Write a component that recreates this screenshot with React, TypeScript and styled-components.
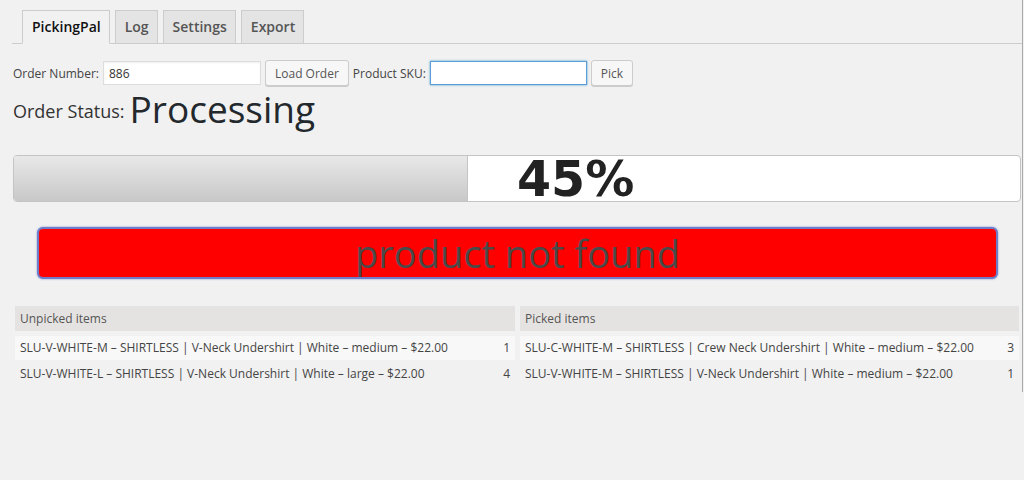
import React from "react";
import styled, { createGlobalStyle } from "styled-components";

const GlobalStyle = createGlobalStyle`
  html, body {
    margin: 0;
    padding: 0;
    background: #f1f1f1;
  }
  body {
    font-family: "Open Sans", "Liberation Sans", sans-serif;
    color: #444;
  }
`;

type Item = { sku: string; qty: number };

const unpicked: Item[] = [
  { sku: "SLU-V-WHITE-M – SHIRTLESS | V-Neck Undershirt | White – medium – $22.00", qty: 1 },
  { sku: "SLU-V-WHITE-L – SHIRTLESS | V-Neck Undershirt | White – large – $22.00", qty: 4 },
];

const picked: Item[] = [
  { sku: "SLU-C-WHITE-M – SHIRTLESS | Crew Neck Undershirt | White – medium – $22.00", qty: 3 },
  { sku: "SLU-V-WHITE-M – SHIRTLESS | V-Neck Undershirt | White – medium – $22.00", qty: 1 },
];

const tabs = ["PickingPal", "Log", "Settings", "Export"];

function ItemTable({ title, items }: { title: string; items: Item[] }) {
  return (
    <Table>
      <TableHead>{title}</TableHead>
      {items.map((item, i) => (
        <TableRow key={item.sku} $striped={i % 2 === 0}>
          <span>{item.sku}</span>
          <span>{item.qty}</span>
        </TableRow>
      ))}
    </Table>
  );
}

export default function App() {
  const progress = 45;
  return (
    <Page>
      <GlobalStyle />
      <TabBar>
        {tabs.map((t, i) => (
          <Tab key={t} $active={i === 0}>
            {t}
          </Tab>
        ))}
      </TabBar>

      <FormRow>
        <Label>Order Number:</Label>
        <TextInput defaultValue="886" $width={158} />
        <Button>Load Order</Button>
        <Label>Product SKU:</Label>
        <TextInput $width={157} $focused />
        <Button>Pick</Button>
      </FormRow>

      <StatusLine>
        <StatusLabel>Order Status:</StatusLabel>
        <StatusValue>Processing</StatusValue>
      </StatusLine>

      <Progress>
        <ProgressFill style={{ width: `${progress}%` }} />
        <ProgressLabel>{progress}%</ProgressLabel>
      </Progress>

      <Alert>product not found</Alert>

      <Tables>
        <ItemTable title="Unpicked items" items={unpicked} />
        <ItemTable title="Picked items" items={picked} />
      </Tables>
    </Page>
  );
}

const Page = styled.div`
  width: 1009px;
  padding: 10px 0 6px 13px;
  border-right: 1px solid #a9a9a9;
`;

const TabBar = styled.div`
  display: flex;
  gap: 5px;
  margin-left: -1px;
  padding-left: 10px;
  border-bottom: 1px solid #ccc;
  height: 33px;
`;

const Tab = styled.div<{ $active?: boolean }>`
  box-sizing: border-box;
  height: 34px;
  padding: 4px 8px 0 9px;
  font-size: 14px;
  line-height: 24px;
  font-weight: 600;
  border: 1px solid #ccc;
  border-bottom-color: ${(p) => (p.$active ? "#f1f1f1" : "#ccc")};
  background: ${(p) => (p.$active ? "#f1f1f1" : "#e4e4e4")};
  color: ${(p) => (p.$active ? "#111" : "#555")};
`;

const FormRow = styled.div`
  display: flex;
  align-items: center;
  gap: 4px;
  margin-top: 16px;
  height: 26px;
`;

const Label = styled.span`
  font-size: 12px;
  color: #444;
`;

const TextInput = styled.input<{ $width: number; $focused?: boolean }>`
  box-sizing: border-box;
  width: ${(p) => p.$width}px;
  height: 24px;
  padding: 0 5px;
  font-family: "Open Sans", "Liberation Sans", sans-serif;
  font-size: 12px;
  color: #333;
  background: #fff;
  border: 1px solid ${(p) => (p.$focused ? "#5b9dd9" : "#ddd")};
  box-shadow: ${(p) =>
    p.$focused ? "0 0 2px rgba(30, 140, 190, 0.8)" : "inset 0 1px 2px rgba(0, 0, 0, 0.07)"};
  outline: none;
`;

const Button = styled.button`
  box-sizing: border-box;
  height: 26px;
  padding: 0 9px;
  font-family: "Open Sans", "Liberation Sans", sans-serif;
  font-size: 12px;
  color: #555;
  background: #f7f7f7;
  border: 1px solid #ccc;
  border-radius: 3px;
  box-shadow: 0 1px 0 #ccc;
  cursor: pointer;
`;

const StatusLine = styled.div`
  display: flex;
  align-items: flex-end;
  gap: 5px;
  height: 44px;
  margin-top: 1px;
`;

const StatusLabel = styled.span`
  font-size: 18px;
  line-height: 20px;
  margin-bottom: 10px;
  color: #333;
`;

const StatusValue = styled.span`
  font-size: 37px;
  line-height: 44px;
  color: #23282d;
`;

const Progress = styled.div`
  position: relative;
  box-sizing: border-box;
  width: 1008px;
  height: 47px;
  margin-top: 24px;
  background: #fff;
  border: 1px solid #c4c4c4;
  border-radius: 4px;
`;

const ProgressFill = styled.div`
  height: 100%;
  background: linear-gradient(to bottom, #e8e8e8, #c8c8c8);
  border-right: 1px solid #c4c4c4;
  border-radius: 3px 0 0 3px;
`;

const ProgressLabel = styled.div`
  position: absolute;
  top: 4px;
  left: 50%;
  line-height: 40px;
  font-family: "DejaVu Sans", Verdana, sans-serif;
  font-weight: bold;
  font-size: 49px;
  color: #222;
`;

const Alert = styled.div`
  box-sizing: border-box;
  margin: 25px 24px 0;
  height: 52px;
  background: #ff0000;
  border: 2px solid #6f7dc9;
  border-radius: 6px;
  box-shadow: 0 0 2px rgba(60, 90, 200, 0.7);
  text-align: center;
  font-size: 38px;
  line-height: 48px;
  color: #4a4a4a;
`;

const Tables = styled.div`
  display: grid;
  grid-template-columns: 500px 499px;
  gap: 5px;
  margin: 27px 0 0 2px;
`;

const Table = styled.div`
  display: flex;
  flex-direction: column;
  gap: 2px;
`;

const TableHead = styled.div`
  height: 25px;
  line-height: 25px;
  padding: 0 5px;
  margin-bottom: 3px;
  background: #e5e3e1;
  font-size: 12px;
  color: #555;
`;

const TableRow = styled.div<{ $striped?: boolean }>`
  display: flex;
  justify-content: space-between;
  height: 24px;
  line-height: 24px;
  padding: 0 5px;
  background: ${(p) => (p.$striped ? "#f8f8f8" : "transparent")};
  font-size: 12px;
  color: #444;
`;
